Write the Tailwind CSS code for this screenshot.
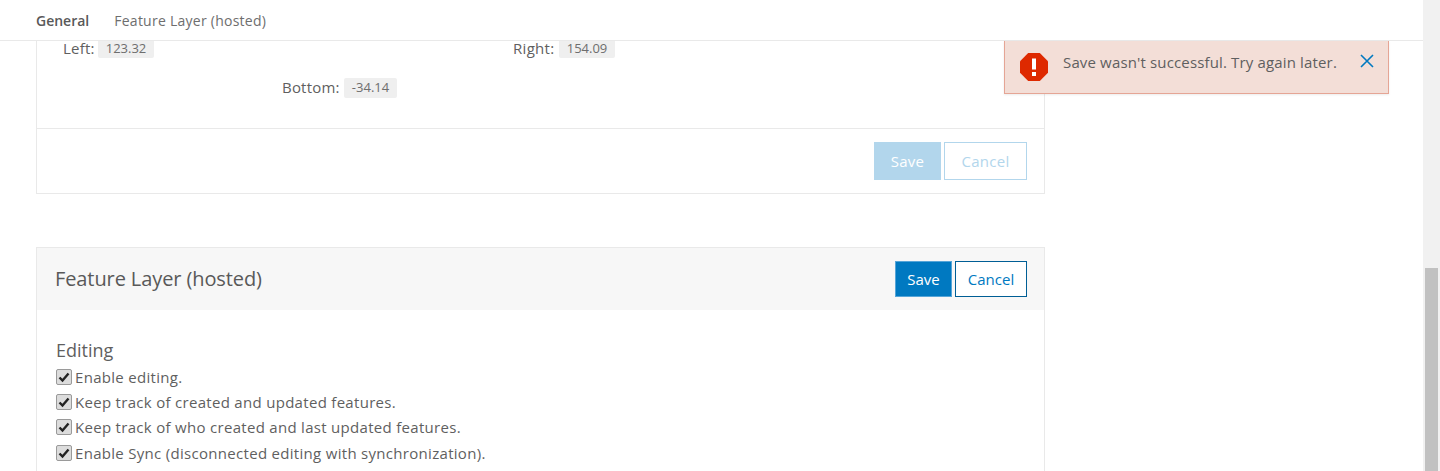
<!DOCTYPE html>
<html lang="en">
<head>
  <meta charset="UTF-8" />
  <title>Feature Layer (hosted)</title>
  <script src="https://cdn.jsdelivr.net/npm/@tailwindcss/browser@4"></script>
</head>
<body class="bg-white text-[#5f5f5f] font-['Open_Sans','Lato',sans-serif] overflow-hidden">
  <div class="relative flex h-[471px] w-[1440px] overflow-hidden">
    <div class="flex w-[1423px] flex-col">
      <nav class="relative z-10 flex h-[41px] shrink-0 items-center gap-[25px] border-b border-[#e9e9e9] bg-white pl-[36px] text-[14px]">
        <span class="font-semibold text-[#595959]">General</span>
        <span class="tracking-[0.25px] text-[#6e6e6e]">Feature Layer (hosted)</span>
      </nav>

      <main class="ml-[36px] w-[1009px] flex-1">
        <section class="border border-t-0 border-[#e9e9e9]">
          <div class="h-[90px]">
            <div class="-mt-[3px] flex h-[20px] items-center leading-[12px]">
              <span class="ml-[26px] w-[35px] text-[15px] tracking-[0.2px]">Left:</span>
              <span class="flex h-[20px] w-[56px] items-center justify-center rounded-[2px] bg-[#efefef] text-[13px] text-[#6e6e6e]">123.32</span>
              <span class="ml-[359px] w-[46px] text-[15px] tracking-[0.3px]">Right:</span>
              <span class="flex h-[20px] w-[56px] items-center justify-center rounded-[2px] bg-[#efefef] text-[13px] text-[#6e6e6e]">154.09</span>
            </div>
            <div class="mt-[20px] flex h-[20px] items-center">
              <span class="ml-[245px] w-[62px] pb-[2px] text-[15px] tracking-[0.2px]">Bottom:</span>
              <span class="flex h-[20px] w-[53px] items-center justify-center rounded-[2px] bg-[#efefef] pb-[1px] text-[13px] text-[#6e6e6e]">-34.14</span>
            </div>
          </div>
          <div class="flex h-[65px] items-center justify-end gap-[3px] border-t border-[#e9e9e9] pr-[17px]">
            <button class="h-[38px] w-[67px] bg-[#b2d6ec] text-[15px] tracking-[0.3px] text-white">Save</button>
            <button class="h-[38px] w-[83px] border border-[#b2d6ec] text-[15px] tracking-[0.3px] text-[#b2d6ec]">Cancel</button>
          </div>
        </section>

        <section class="mt-[53px] border border-b-0 border-[#e9e9e9] pb-[40px]">
          <div class="flex h-[62px] items-center justify-between bg-[#f7f7f7] pl-[18px] pr-[17px]">
            <h2 class="pb-[1px] text-[20px] tracking-[-0.1px] text-[#595959]">Feature Layer (hosted)</h2>
            <div class="flex items-center gap-[3px]">
              <button class="h-[36px] w-[57px] border border-[#56a5d8] bg-[#0079c1] text-[15px] text-white">Save</button>
              <button class="h-[36px] w-[72px] border border-[#005e95] bg-white text-[15px] text-[#0079c1]">Cancel</button>
            </div>
          </div>
          <div class="pl-[19px] pt-[29px]">
            <h3 class="text-[18px] leading-[22px]">Editing</h3>
            <ul class="mt-[4px] text-[15px] tracking-[0.3px]">
              <li class="flex h-[25px] items-center gap-[3px]">
                <span class="mb-[2px] flex h-[16px] w-[16px] items-center justify-center rounded-[2px] border border-[#9a9a9a] bg-[#dcdcdc]">
                  <svg viewBox="0 0 12 12" class="h-[12px] w-[12px]"><path d="M1.5 6.5 L4.5 9.5 L10.5 2.5" fill="none" stroke="#222" stroke-width="2.4"/></svg>
                </span>
                Enable editing.
              </li>
              <li class="flex h-[25px] items-center gap-[3px]">
                <span class="mb-[2px] flex h-[16px] w-[16px] items-center justify-center rounded-[2px] border border-[#9a9a9a] bg-[#dcdcdc]">
                  <svg viewBox="0 0 12 12" class="h-[12px] w-[12px]"><path d="M1.5 6.5 L4.5 9.5 L10.5 2.5" fill="none" stroke="#222" stroke-width="2.4"/></svg>
                </span>
                Keep track of created and updated features.
              </li>
              <li class="flex h-[25px] items-center gap-[3px]">
                <span class="mb-[2px] flex h-[16px] w-[16px] items-center justify-center rounded-[2px] border border-[#9a9a9a] bg-[#dcdcdc]">
                  <svg viewBox="0 0 12 12" class="h-[12px] w-[12px]"><path d="M1.5 6.5 L4.5 9.5 L10.5 2.5" fill="none" stroke="#222" stroke-width="2.4"/></svg>
                </span>
                Keep track of who created and last updated features.
              </li>
              <li class="mt-[1px] flex h-[25px] items-center gap-[3px]">
                <span class="mb-[2px] flex h-[16px] w-[16px] items-center justify-center rounded-[2px] border border-[#9a9a9a] bg-[#dcdcdc]">
                  <svg viewBox="0 0 12 12" class="h-[12px] w-[12px]"><path d="M1.5 6.5 L4.5 9.5 L10.5 2.5" fill="none" stroke="#222" stroke-width="2.4"/></svg>
                </span>
                Enable Sync (disconnected editing with synchronization).
              </li>
            </ul>
          </div>
        </section>
      </main>
    </div>

    <!-- scrollbar -->
    <div class="relative w-[17px] bg-[#f1f1f1]">
      <div class="absolute bottom-0 left-[2px] h-[203px] w-[13px] bg-[#c1c1c1]"></div>
    </div>

    <!-- toast -->
    <div class="absolute left-[1004px] top-[41px] z-20 flex h-[53px] w-[385px] items-center border border-t-0 border-[#e5a595] bg-[#f3ded7] pl-[15px] shadow-[0_1px_2px_rgba(0,0,0,0.08)]">
      <svg viewBox="0 0 28 28" class="h-[28px] w-[28px] shrink-0">
        <path d="M8.2 0 H19.8 L28 8.2 V19.8 L19.8 28 H8.2 L0 19.8 V8.2 Z" fill="#de2900"/>
        <rect x="12" y="5.5" width="4" height="11" fill="#fff"/>
        <rect x="12" y="19" width="4" height="4" fill="#fff"/>
      </svg>
      <span class="ml-[15px] -mt-[9px] text-[15px] tracking-[0.15px] text-[#5f5f5f]">Save wasn't successful. Try again later.</span>
      <svg viewBox="0 0 14 14" class="absolute left-[355px] top-[13px] h-[14px] w-[14px]">
        <path d="M1 1 L13 13 M13 1 L1 13" stroke="#0079c1" stroke-width="1.6" fill="none"/>
      </svg>
    </div>
  </div>
</body>
</html>
